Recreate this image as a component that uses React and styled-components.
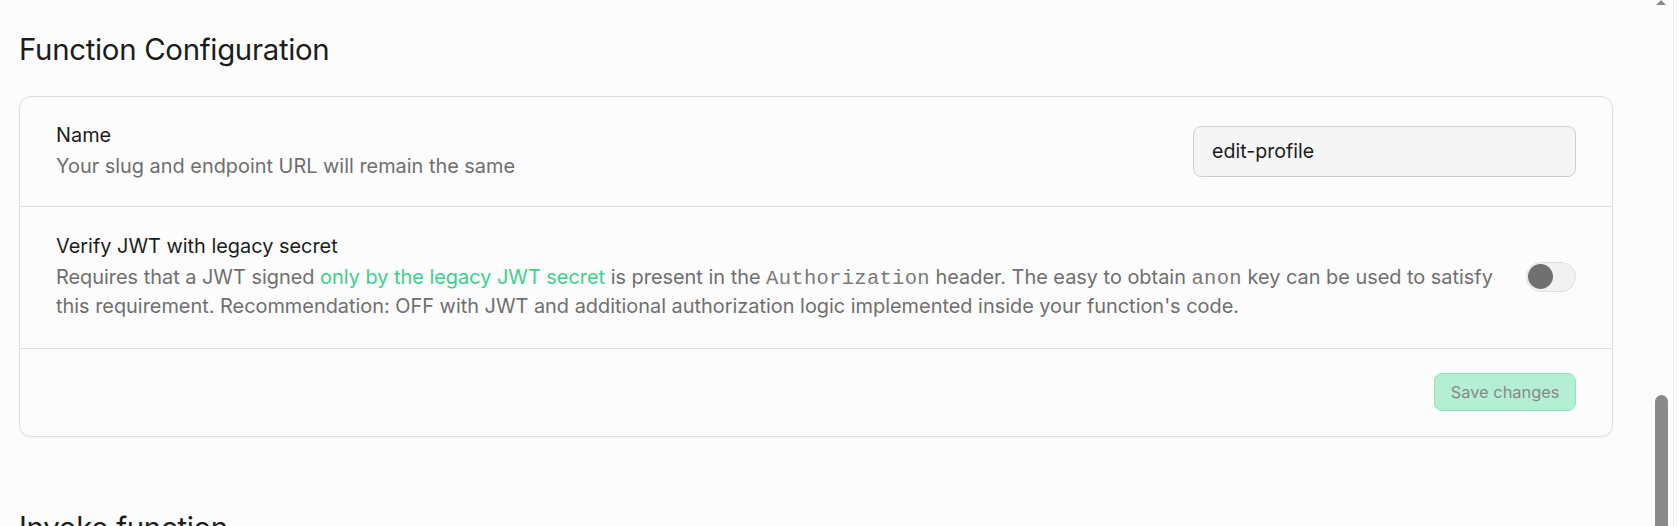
import React from 'react';
import styled, { createGlobalStyle } from 'styled-components';

const GlobalStyle = createGlobalStyle`
  html, body { margin: 0; padding: 0; background: #fcfcfc; }
  body {
    font-family: Inter, "Noto Sans", sans-serif;
    color: #1c1c1c;
    overflow: hidden;
    -webkit-font-smoothing: antialiased;
  }
  * { box-sizing: border-box; }
`;

const Shell = styled.div`
  display: flex;
  width: 1678px;
  height: 526px;
  overflow: hidden;
  background: #fcfcfc;
`;

const Main = styled.main`
  flex: 1;
  min-width: 0;
  padding: 30px 37px 0 19px;
`;

const PageTitle = styled.h2`
  margin: ${(p) => p.$top || 0}px 0 0;
  font-size: 29.4px;
  line-height: 40px;
  font-weight: 400;
  color: #1c1c1c;
  letter-spacing: -0.3px;
`;

const Card = styled.section`
  margin-top: 26px;
  border: 1px solid #dedede;
  border-radius: 12px;
  background: #fcfcfc;
  box-shadow: 0 1px 2px rgba(0, 0, 0, 0.04);
  overflow: hidden;
`;

const Row = styled.div`
  display: flex;
  align-items: center;
  justify-content: ${(p) => (p.$end ? 'flex-end' : 'space-between')};
  gap: 24px;
  padding: ${(p) => p.$pad || '24px 36px 25px'};
  border-bottom: 1px solid #e2e2e2;
  &:last-child { border-bottom: none; }
`;

const TextBlock = styled.div`
  display: flex;
  flex-direction: column;
  gap: 3px;
  flex: 1;
  min-width: 0;
`;

const Label = styled.div`
  font-size: 19.9px;
  line-height: 28px;
  color: #1c1c1c;
`;

const Description = styled.p`
  margin: 0;
  font-size: 19.9px;
  line-height: 29px;
  color: #6f6f6f;
`;

const Link = styled.a`
  color: #3ecf8e;
  text-decoration: none;
`;

const Code = styled.code`
  font-family: "Liberation Mono", "DejaVu Sans Mono", monospace;
  font-size: 20.5px;
  line-height: 1;
  letter-spacing: 0.3px;
  color: #7a7a7a;
`;

const Input = styled.input`
  width: 383px;
  height: 51px;
  flex: none;
  padding: 0 18px;
  border: 1px solid #cfcfcf;
  border-radius: 8px;
  background: #f5f5f5;
  font-family: inherit;
  font-size: 19.6px;
  color: #1c1c1c;
  outline: none;
`;

const Switch = styled.button`
  flex: none;
  display: flex;
  align-items: center;
  width: 50px;
  height: 30px;
  padding: 0 0 0 1px;
  border: 1px solid #dedede;
  border-radius: 15px;
  background: #f1f1f1;
  cursor: pointer;
`;

const Knob = styled.span`
  width: 25px;
  height: 25px;
  border-radius: 50%;
  background: #707070;
`;

const SaveButton = styled.button`
  height: 38px;
  padding: 0 15.5px;
  border: 1px solid #94e2bf;
  border-radius: 8px;
  background: #b4efd5;
  color: #888888;
  font-family: inherit;
  font-size: 16.4px;
  cursor: not-allowed;
`;

const Gutter = styled.div`
  flex: none;
  width: 28px;
  display: flex;
`;

const Track = styled.div`
  width: 23px;
  display: flex;
  flex-direction: column;
  align-items: flex-start;
  padding-left: 5px;
`;

const Arrow = styled.div`
  margin-left: 1px;
  width: 0;
  height: 0;
  border-left: 5.5px solid transparent;
  border-right: 5.5px solid transparent;
  border-bottom: 5px solid #8a8a8a;
`;

const Thumb = styled.div`
  margin-top: 390px;
  width: 13px;
  flex: 1;
  border-radius: 6.5px 6.5px 0 0;
  background: #8a8a8a;
`;

const Edge = styled.div`
  width: 1px;
  background: #e8e8e8;
`;

export default function App() {
  return (
    <>
      <GlobalStyle />
      <Shell>
        <Main>
          <PageTitle>Function Configuration</PageTitle>
          <Card>
            <Row>
              <TextBlock>
                <Label>Name</Label>
                <Description>Your slug and endpoint URL will remain the same</Description>
              </TextBlock>
              <Input defaultValue="edit-profile" />
            </Row>
            <Row $pad="25px 36px 27px">
              <TextBlock>
                <Label>Verify JWT with legacy secret</Label>
                <Description>
                  Requires that a JWT signed <Link href="#">only by the legacy JWT secret</Link> is
                  present in the <Code>Authorization</Code> header. The easy to obtain{' '}
                  <Code>anon</Code> key can be used to satisfy this requirement. Recommendation: OFF
                  with JWT and additional authorization logic implemented inside your function's
                  code.
                </Description>
              </TextBlock>
              <Switch aria-label="Verify JWT">
                <Knob />
              </Switch>
            </Row>
            <Row $end $pad="24px 36px 25px">
              <SaveButton disabled>Save changes</SaveButton>
            </Row>
          </Card>
          <PageTitle $top={71}>Invoke function</PageTitle>
        </Main>
        <Gutter>
          <Track>
            <Arrow />
            <Thumb />
          </Track>
          <Edge />
        </Gutter>
      </Shell>
    </>
  );
}
